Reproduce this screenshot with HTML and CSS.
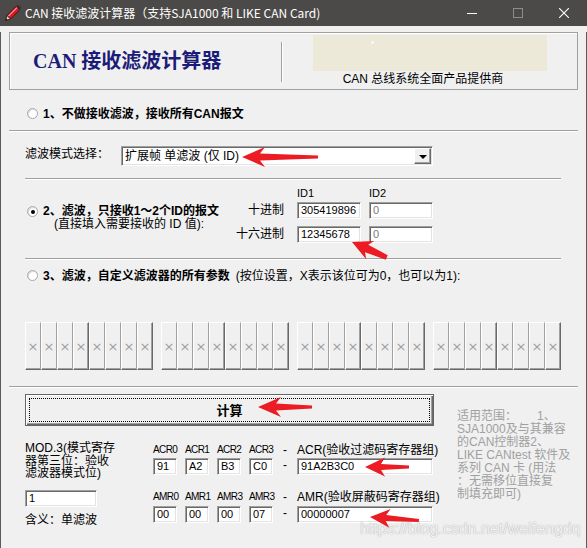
FILE: index.html
```html
<!DOCTYPE html>
<html lang="zh-CN">
<head>
<meta charset="utf-8">
<title>CAN 接收滤波计算器</title>
<link rel="stylesheet" href="styles.css">
</head>
<body>
<div class="window">
  <div class="titlebar">
    <svg class="app-icon" width="16" height="16" viewBox="0 0 16 16">
      <g transform="rotate(-45 8 8)">
        <rect x="2" y="5.5" width="13" height="5" fill="#e3141c" stroke="#1a1a1a" stroke-width="0.8"/>
        <rect x="2.5" y="6.4" width="12" height="1.2" fill="#ff9a9a"/>
        <polygon points="2,5.5 -2.5,8 2,10.5" fill="#f1d3a2" stroke="#1a1a1a" stroke-width="0.8"/>
        <polygon points="-0.8,7 -2.6,8 -0.8,9" fill="#111"/>
        <rect x="15" y="5.5" width="2.5" height="5" fill="#333"/>
      </g>
    </svg>
    <span class="title-text">CAN 接收滤波计算器（支持SJA1000 和 LIKE CAN Card)</span>
    <div class="controls">
      <span class="ctl"><svg width="10" height="10" viewBox="0 0 10 10"><path d="M0 5.5H10" stroke="#fff" stroke-width="1"/></svg></span>
      <span class="ctl"><svg width="10" height="10" viewBox="0 0 10 10"><rect x="0.5" y="0.5" width="9" height="9" fill="none" stroke="#8c8c8c" stroke-width="1"/></svg></span>
      <span class="ctl"><svg width="10" height="10" viewBox="0 0 10 10"><path d="M0 0L10 10M10 0L0 10" stroke="#fff" stroke-width="1.1"/></svg></span>
    </div>
  </div>

  <div class="client">
    <div class="header">
      <div class="brand">CAN 接收滤波计算器</div>
      <div class="vsep"></div>
      <div class="vendor">
        <div class="logo"><span class="logo-spot"></span></div>
        <div class="vendor-text">CAN 总线系统全面产品提供商</div>
      </div>
    </div>

    <div class="row1">
      <span class="radio"></span>
      <span class="opt">1、不做接收滤波，接收所有CAN报文</span>
    </div>
    <div class="sep"></div>

    <div class="mode-row">
      <span class="mode-label">滤波模式选择：</span>
      <div class="select">
        <span class="select-text">扩展帧 单滤波 (仅 ID)</span>
        <span class="select-btn"><i class="tri"></i></span>
      </div>
    </div>
    <div class="sep sep-inner"></div>

    <div class="row2">
      <div class="r2-left">
        <span class="radio checked"></span>
        <div class="r2-texts">
          <div class="opt">2、滤波，只接收1～2个ID的报文</div>
          <div class="r2-sub">(直接填入需要接收的 ID 值):</div>
        </div>
      </div>
      <div class="r2-lbl r2-dec">十进制</div>
      <div class="r2-lbl r2-hex">十六进制</div>
      <div class="idh idh1">ID1</div>
      <div class="idh idh2">ID2</div>
      <div class="tb tb-id c3 rw2">305419896</div>
      <div class="tb tb-id c4 rw2 dim">0</div>
      <div class="tb tb-id c3 rw3">12345678</div>
      <div class="tb tb-id c4 rw3 dim">0</div>
    </div>
    <div class="sep sep-inner"></div>

    <div class="row3">
      <div class="row3-line">
        <span class="radio"></span>
        <span class="opt">3、滤波，自定义滤波器的所有参数</span>
        <span class="row3-note">(按位设置，X表示该位可为0，也可以为1):</span>
      </div>
      <div class="bits">
        <div class="bgroup"><span class="bit">×</span><span class="bit">×</span><span class="bit">×</span><span class="bit">×</span><span class="bit">×</span><span class="bit">×</span><span class="bit">×</span><span class="bit">×</span></div>
        <div class="bgroup"><span class="bit">×</span><span class="bit">×</span><span class="bit">×</span><span class="bit">×</span><span class="bit">×</span><span class="bit">×</span><span class="bit">×</span><span class="bit">×</span></div>
        <div class="bgroup"><span class="bit">×</span><span class="bit">×</span><span class="bit">×</span><span class="bit">×</span><span class="bit">×</span><span class="bit">×</span><span class="bit">×</span><span class="bit">×</span></div>
        <div class="bgroup"><span class="bit">×</span><span class="bit">×</span><span class="bit">×</span><span class="bit">×</span><span class="bit">×</span><span class="bit">×</span><span class="bit">×</span><span class="bit">×</span></div>
      </div>
    </div>
    <div class="sep"></div>

    <div class="calc-section">
      <div class="calc-col">
        <div class="calc"><div class="calc-focus">计算</div></div>
        <div class="form">
          <div class="mod-col">
            <div class="mod-text">MOD.3(模式寄存<br>器第三位：验收<br>滤波器模式位)</div>
            <div class="tb tb-mod">1</div>
            <div class="mod-mean">含义：单滤波</div>
          </div>
          <div class="regs-col">
            <div class="regs regs-acr">
              <div class="rlbl">ACR0</div>
              <div class="rlbl">ACR1</div>
              <div class="rlbl">ACR2</div>
              <div class="rlbl">ACR3</div>
              <div class="dash">-</div>
              <div class="glbl">ACR(验收过滤码寄存器组)</div>
              <div class="tb">91</div>
              <div class="tb">A2</div>
              <div class="tb">B3</div>
              <div class="tb">C0</div>
              <div class="dash">-</div>
              <div class="tb">91A2B3C0</div>
            </div>
            <div class="regs regs-amr">
              <div class="rlbl">AMR0</div>
              <div class="rlbl">AMR1</div>
              <div class="rlbl">AMR3</div>
              <div class="rlbl">AMR3</div>
              <div class="dash">-</div>
              <div class="glbl">AMR(验收屏蔽码寄存器组)</div>
              <div class="tb">00</div>
              <div class="tb">00</div>
              <div class="tb">00</div>
              <div class="tb">07</div>
              <div class="dash">-</div>
              <div class="tb">00000007</div>
            </div>
          </div>
        </div>
      </div>
      <div class="info">
        <span class="info-line">适用范围：      1、</span>
        <span class="info-line">SJA1000及与其兼容</span>
        <span class="info-line">的CAN控制器2、</span>
        <span class="info-line">LIKE CANtest 软件及</span>
        <span class="info-line">系列 CAN 卡 (用法</span>
        <span class="info-line">：无需移位直接复</span>
        <span class="info-line">制填充即可)</span>
      </div>
    </div>
  </div>

  <div class="watermark">https://blog.csdn.net/weifengdq</div>

  <svg class="arrows" width="587" height="548" viewBox="0 0 587 548">
    <path transform="translate(242,157)" d="M0,0 L23,-10 L18,-3.5 L76,-1.5 L76,1.5 L18,3.5 L23,10 Z"/>
    <path transform="translate(352,242) rotate(24)" d="M0,0 L20,-10 L16,-4 L38,-2.5 L38,2.5 L16,4 L20,10 Z"/>
    <path transform="translate(258,407)" d="M0,0 L23,-10 L18,-3.5 L54,-1.5 L54,1.5 L18,3.5 L23,10 Z"/>
    <path transform="translate(365,467)" d="M0,0 L20,-9.5 L16,-3 L44,-1.5 L44,1.5 L16,3 L20,9.5 Z"/>
    <path transform="translate(370,517) rotate(4)" d="M0,0 L20,-9.5 L16,-3 L49,-1.5 L49,1.5 L16,3 L20,9.5 Z"/>
  </svg>
</div>
</body>
</html>
```

FILE: styles.css
```css
* { box-sizing: border-box; }
html, body { margin: 0; padding: 0; }
body {
  width: 587px;
  height: 548px;
  overflow: hidden;
  background: #f0f0f0;
  font-family: "Liberation Sans", "Noto Sans CJK SC", sans-serif;
  font-size: 12px;
  color: #000;
}
.window { position: relative; width: 587px; height: 548px; }

/* title bar */
.titlebar {
  height: 26px;
  background: #4b4a48;
  display: flex;
  align-items: center;
  color: #fff;
}
.app-icon { margin-left: 5px; flex: none; }
.title-text {
  margin-left: 4px;
  font-family: "Noto Sans CJK SC", sans-serif;
  font-size: 12px;
  line-height: 26px;
  white-space: nowrap;
}
.controls { margin-left: auto; display: flex; height: 26px; }
.ctl { width: 46px; height: 26px; display: flex; align-items: center; justify-content: center; }
.ctl svg { display: block; }

/* client area */
.client {
  height: 522px;
  border: 1px solid #5b5b5b;
  border-top: 0;
  padding: 0 8px;
}

.header {
  margin-top: 6px;
  height: 58px;
  border: 1px solid #a0a0a0;
  box-shadow: inset 1px 1px 0 #fff;
  display: flex;
}
.brand {
  width: 271px;
  padding-left: 23px;
  align-self: center;
  font-family: "Liberation Serif", "Noto Sans CJK SC", serif;
  font-weight: bold;
  font-size: 20px;
  line-height: 24px;
  color: #1c1c78;
  white-space: nowrap;
}
.vsep {
  width: 2px;
  height: 40px;
  margin-top: 9px;
  border-left: 1px solid #a0a0a0;
  border-right: 1px solid #fff;
}
.vendor { margin-left: 30px; width: 234px; padding-top: 2px; }
.logo { position: relative; height: 36px; background: #ece9d8; }
.logo-spot {
  position: absolute; left: 58px; top: 6px;
  width: 3px; height: 3px; background: #fbfaf5; border-radius: 50%;
}
.vendor-text {
  margin-top: 1px;
  line-height: 14px;
  text-align: center;
  padding-right: 14px;
  white-space: nowrap;
}

/* radios */
.radio {
  flex: none;
  width: 11px;
  height: 11px;
  border-radius: 50%;
  background: #fff;
  border: 1px solid #a8a8a8;
  box-shadow: inset 1px 1px 0 #dcdcdc;
  position: relative;
}
.radio.checked::after {
  content: "";
  position: absolute;
  left: 2.5px; top: 2.5px;
  width: 4px; height: 4px;
  border-radius: 50%;
  background: #000;
}
.opt { font-weight: bold; white-space: nowrap; }

.row1 {
  height: 40px;
  padding-top: 17px;
  margin-left: 18px;
  display: flex;
  align-items: flex-start;
  gap: 5px;
  line-height: 14px;
}
.row1 .radio { margin-top: 1px; }

.sep {
  height: 2px;
  border-top: 1px solid #a0a0a0;
  border-bottom: 1px solid #fff;
}
.sep-inner { margin-left: 16px; width: 536px; }

/* mode row */
.mode-row {
  height: 46px;
  padding-top: 14px;
  margin-left: 16px;
  display: flex;
  align-items: flex-start;
}
.mode-label { width: 96px; margin-top: 1px; line-height: 14px; white-space: nowrap; }
.select {
  width: 312px;
  height: 20px;
  background: #fff;
  border: 1px solid;
  border-color: #a0a0a0 #fff #fff #a0a0a0;
  box-shadow: inset 1px 1px 0 #696969, inset -1px -1px 0 #e3e3e3;
  display: flex;
  align-items: center;
  padding: 1px 1px 1px 3px;
}
.select-text { flex: 1; line-height: 16px; white-space: nowrap; }
.select-btn {
  width: 17px;
  height: 16px;
  background: #f0f0f0;
  border: 1px solid;
  border-color: #fff #696969 #696969 #fff;
  box-shadow: inset -1px -1px 0 #a0a0a0;
  display: flex;
  align-items: center;
  justify-content: center;
}
.tri {
  width: 0; height: 0;
  border-left: 4px solid transparent;
  border-right: 4px solid transparent;
  border-top: 4px solid #000;
  margin-top: 1px;
}

/* row 2 */
.row2 {
  height: 78px;
  padding-top: 6px;
  margin-left: 18px;
  display: grid;
  grid-template-columns: 209px 49px 76px 72px;
  grid-template-rows: 16px 24px 17px;
  align-items: start;
}
.r2-left {
  grid-column: 1;
  grid-row: 1 / 4;
  padding-top: 19px;
  display: flex;
  gap: 5px;
  line-height: 13px;
}
.r2-left .radio { margin-top: 1px; }
.r2-sub { padding-left: 11px; white-space: nowrap; }
.r2-lbl { grid-column: 2; text-align: right; line-height: 17px; white-space: nowrap; padding-right: 1px; }
.r2-dec { grid-row: 2; }
.r2-hex { grid-row: 3; }
.idh { grid-row: 1; justify-self: end; width: 64px; line-height: 14px; font-size: 11px; }
.idh1 { grid-column: 3; }
.idh2 { grid-column: 4; }
.c3 { grid-column: 3; justify-self: end; }
.c4 { grid-column: 4; justify-self: end; }
.rw2 { grid-row: 2; }
.rw3 { grid-row: 3; }

/* text boxes */
.tb {
  height: 17px;
  background: #fff;
  border: 1px solid;
  border-color: #a0a0a0 #fff #fff #a0a0a0;
  box-shadow: inset 1px 1px 0 #696969, inset -1px -1px 0 #e3e3e3;
  font-family: "Liberation Sans", sans-serif;
  font-size: 11px;
  line-height: 15px;
  padding-left: 3px;
  white-space: nowrap;
  overflow: hidden;
}
.tb-id { width: 64px; }
.dim { color: #7a7a7a; }

/* row 3 */
.row3 { height: 126px; padding-top: 9px; }
.row3-line {
  margin-left: 18px;
  display: flex;
  align-items: flex-start;
  gap: 5px;
  line-height: 14px;
}
.row3-line .radio { margin-top: 1px; }
.row3-note { margin-left: 1px; white-space: nowrap; }
.bits { margin-left: 16px; margin-top: 39px; display: flex; gap: 8px; }
.bgroup { display: flex; }
.bit {
  width: 16px;
  height: 48px;
  border-top: 1px solid #fff;
  border-left: 1px solid #fff;
  border-right: 1px solid #a0a0a0;
  border-bottom: 1px solid #696969;
  box-shadow: inset 0 -1px 0 #a0a0a0;
  display: flex;
  align-items: center;
  justify-content: center;
  color: #a0a0a0;
  font-family: "DejaVu Sans", sans-serif;
  font-size: 13px;
  line-height: 13px;
}
.bit:nth-child(4n) { border-right-color: #696969; box-shadow: inset -1px -1px 0 #a0a0a0; }

/* calc section */
.calc-section { display: flex; margin-left: 16px; padding-top: 6px; }
.calc-col { width: 409px; }
.calc {
  height: 32px;
  border: 1px solid #646464;
  box-shadow: inset 1px 1px 0 #fff, inset -1px -1px 0 #696969, inset -2px -2px 0 #a0a0a0;
  padding: 3px;
}
.calc-focus {
  height: 100%;
  border: 1px dotted #000;
  display: flex;
  align-items: center;
  justify-content: center;
  font-weight: bold;
  font-size: 13px;
  padding-bottom: 1px;
}
.form { margin-top: 16px; display: flex; }
.mod-col { width: 128px; }
.mod-text { line-height: 12.5px; white-space: nowrap; }
.tb-mod { width: 72px; margin-top: 10px; }
.mod-mean { margin-top: 6px; line-height: 14px; }
.regs-col { padding-top: 1px; }
.regs {
  display: grid;
  grid-template-columns: 24px 24px 24px 24px 8px 136px;
  grid-template-rows: 14px 17px;
  column-gap: 8px;
  row-gap: 1px;
}
.regs-amr { margin-top: 15px; row-gap: 2px; }
.rlbl {
  font-size: 10px;
  letter-spacing: -0.6px;
  line-height: 14px;
  white-space: nowrap;
}
.dash { text-align: center; line-height: 14px; }
.glbl { line-height: 14px; white-space: nowrap; }

.info {
  margin-left: 23px;
  padding-top: 16px;
  color: #a0a0a0;
  line-height: 13px;
}
.info-line { display: block; white-space: pre; }

.watermark {
  position: absolute;
  left: 360px;
  top: 519px;
  font-family: "Liberation Sans", sans-serif;
  font-size: 16px;
  line-height: 20px;
  color: rgba(255, 255, 255, 0.9);
  text-shadow: 0 0 1px rgba(110, 110, 110, 0.8);
  white-space: nowrap;
}
.arrows { position: absolute; left: 0; top: 0; pointer-events: none; }
.arrows path { fill: #ec1c24; }
```
